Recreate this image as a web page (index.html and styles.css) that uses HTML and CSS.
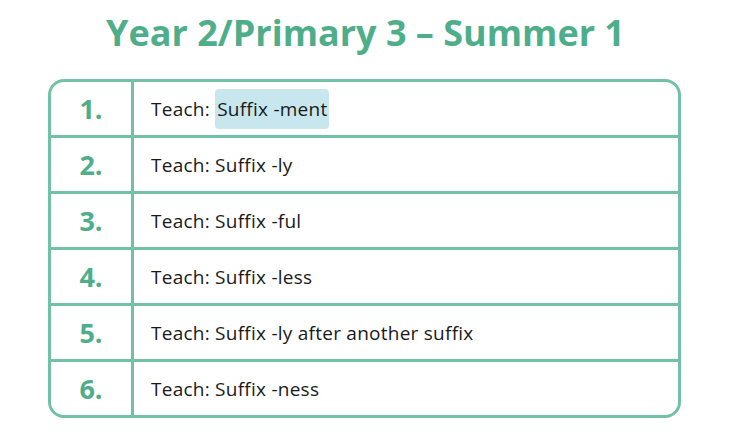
FILE: index.html
```html
<!DOCTYPE html>
<html>
<head>
<meta charset="utf-8">
<link rel="stylesheet" href="styles.css">
</head>
<body>
<h1 class="title">Year 2/Primary 3 – Summer 1</h1>
<div class="table">
  <div class="row"><div class="num">1.</div><div class="text">Teach: <span class="hl">Suffix -ment</span></div></div>
  <div class="row"><div class="num">2.</div><div class="text">Teach: Suffix -ly</div></div>
  <div class="row"><div class="num">3.</div><div class="text">Teach: Suffix -ful</div></div>
  <div class="row"><div class="num">4.</div><div class="text">Teach: Suffix -less</div></div>
  <div class="row"><div class="num">5.</div><div class="text">Teach: Suffix -ly after another suffix</div></div>
  <div class="row"><div class="num">6.</div><div class="text">Teach: Suffix -ness</div></div>
</div>
</body>
</html>
```
FILE: styles.css
```css
html, body {
  margin: 0;
  padding: 0;
  background: #ffffff;
}
body {
  width: 731px;
  height: 446px;
  overflow: hidden;
  font-family: "Open Sans", Lato, sans-serif;
}
.title {
  margin: 0;
  padding-top: 10px;
  height: 79px;
  box-sizing: border-box;
  text-align: center;
  font-size: 36px;
  line-height: 45px;
  font-weight: 700;
  color: #4fae8a;
}
.table {
  margin-left: 48px;
  width: 633px;
  box-sizing: border-box;
  border: 3px solid #72c1a6;
  border-radius: 16px;
  overflow: hidden;
}
.row {
  display: flex;
  height: 53px;
}
.row + .row {
  border-top: 3px solid #72c1a6;
}
.num {
  width: 80px;
  flex: none;
  border-right: 3px solid #72c1a6;
  display: flex;
  align-items: center;
  justify-content: center;
  font-size: 27px;
  font-weight: 700;
  color: #4fae8a;
}
.text {
  flex: 1;
  display: flex;
  align-items: center;
  padding-left: 17px;
  font-size: 19px;
  letter-spacing: 0.25px;
  color: #1a1a1a;
  white-space: pre;
}
.hl {
  background: #c7e6ee;
  border-radius: 4px;
  padding: 7px 2px 7px 2px;
}
```
